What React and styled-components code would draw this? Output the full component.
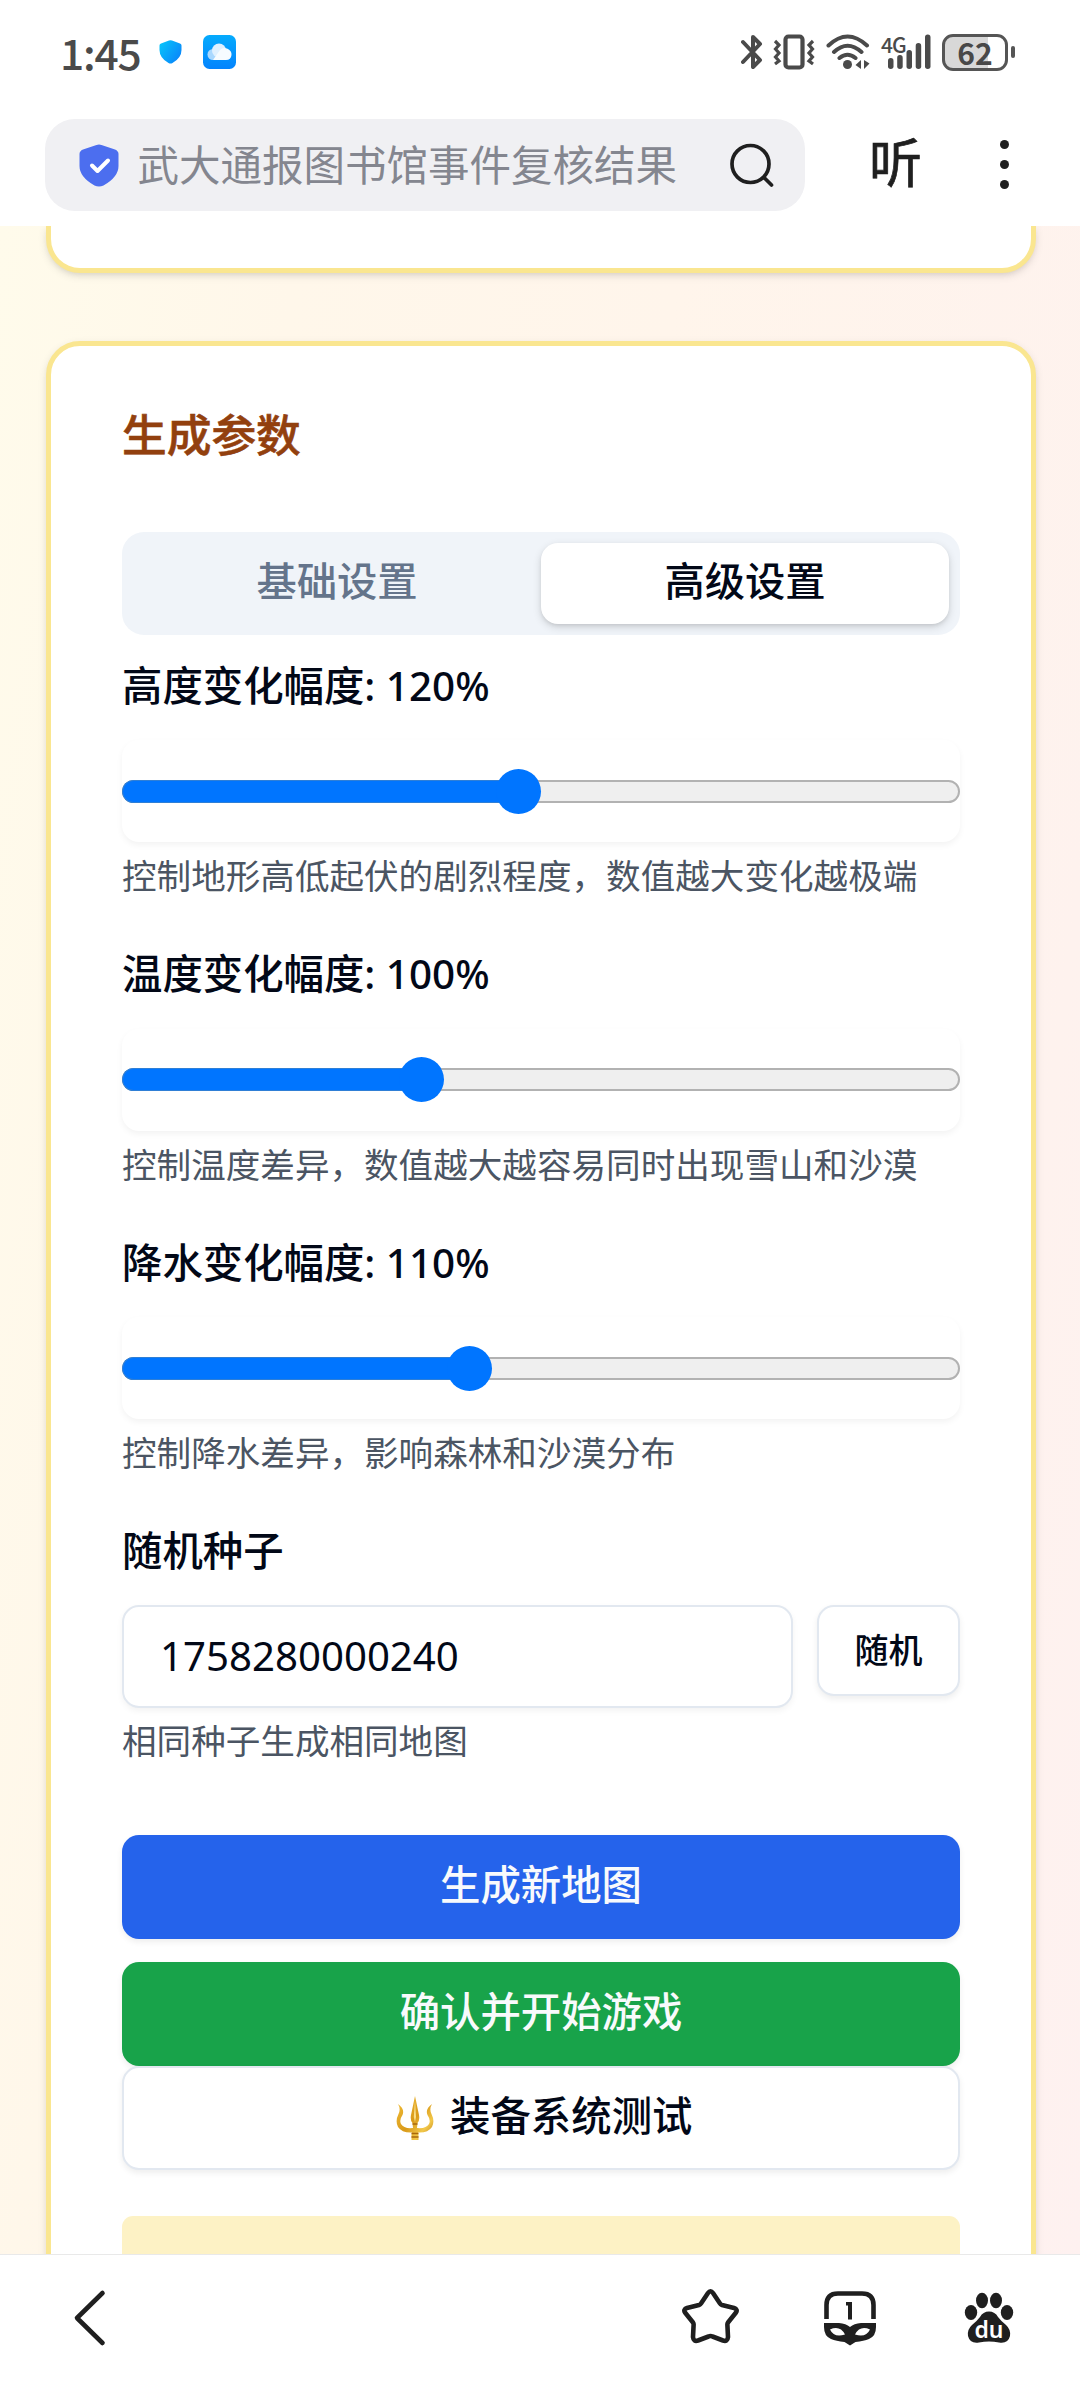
import React from "react";
import styled, { createGlobalStyle } from "styled-components";

const Global = createGlobalStyle`
  * { box-sizing: border-box; }
  html, body { margin: 0; padding: 0; }
  body { background: #fff; }
  button, input { font: inherit; margin: 0; }
`;

const Screen = styled.div`
  width: 1080px;
  height: 2382px;
  display: flex;
  flex-direction: column;
  overflow: hidden;
  background: #fff;
  color: #020817;
  font-family: "Noto Sans", "Noto Sans CJK SC", sans-serif;
`;

const StatusBar = styled.header`
  height: 119px;
  flex: none;
  display: flex;
  align-items: flex-start;
  justify-content: space-between;
  padding: 33px 65px 0 60px;
`;

const StatusGroup = styled.div`
  display: flex;
  align-items: center;
  height: 38px;
`;

const Clock = styled.span`
  font-family: "Noto Sans CJK SC", sans-serif;
  font-size: 42.5px;
  font-weight: 500;
  line-height: 38px;
  letter-spacing: -1.2px;
  width: 99px;
  color: #4a4a4a;
`;

const Network = styled.div`
  display: flex;
  align-items: flex-start;
  margin-left: 11px;
`;

const NetworkType = styled.span`
  width: 17px;
  margin-right: -10px;
  font-family: "Noto Sans CJK SC", sans-serif;
  font-size: 21px;
  font-weight: 500;
  line-height: 20px;
  letter-spacing: -1px;
  white-space: nowrap;
  color: #4a4a4a;
`;

const BatteryText = styled.span`
  font-family: "Noto Sans CJK SC", sans-serif;
  font-size: 30px;
  font-weight: 700;
  line-height: 30px;
`;

const Battery = styled.div`
  width: 66px;
  height: 37px;
  margin-left: 9px;
  border: 3px solid #555;
  border-radius: 11px;
  display: flex;
  align-items: center;
  justify-content: center;
  color: #484848;
  background: linear-gradient(90deg, #d8d8d8 43px, #fff 43px);
`;

const BatteryNub = styled.div`
  width: 4px;
  height: 12px;
  margin-left: 3px;
  border-radius: 2px;
  background: #555;
`;

const AddressBar = styled.div`
  height: 107px;
  flex: none;
  display: flex;
  align-items: flex-start;
  padding-left: 45px;
`;

const SearchPill = styled.div`
  width: 760px;
  height: 92px;
  border-radius: 30px;
  background: #f0f0f3;
  display: flex;
  align-items: center;
  padding: 0 31px 0 34px;
`;

const SearchText = styled.span`
  flex: 1;
  margin-left: 18.5px;
  font-size: 41.5px;
  line-height: 60px;
  color: #84868f;
  white-space: nowrap;
`;

const Listen = styled.span`
  margin: 10px 0 0 64px;
  width: 54px;
  font-size: 53px;
  line-height: 68px;
  font-weight: 400;
  -webkit-text-stroke: 0.7px #1f1f1f;
  color: #1f1f1f;
`;

const MoreDots = styled.div`
  margin: 21px 0 0 77px;
  height: 49px;
  display: flex;
  flex-direction: column;
  justify-content: space-between;
  i { width: 9px; height: 9px; border-radius: 50%; background: #1f1f1f; }
`;

const Page = styled.main`
  flex: 1;
  min-height: 0;
  overflow: hidden;
  padding: 0 44px 0 46px;
  display: flex;
  flex-direction: column;
  gap: 68px;
  background: linear-gradient(98deg, #fffbeb 0%, #fff7ea 22%, #fff5eb 50%, #fef2ee 86%, #fef1f0 100%);
`;

const Card = styled.section`
  flex: none;
  border: 5.5px solid #fae690;
  border-radius: 34px;
  background: #fff;
  box-shadow: 0 3px 8px rgba(0, 0, 0, 0.1), 0 3px 6px -3px rgba(0, 0, 0, 0.1);
`;

const CardTail = styled(Card)`
  height: 46.5px;
  border-top: 0;
  border-top-left-radius: 0;
  border-top-right-radius: 0;
`;

const ParamCard = styled(Card)`
  height: 2100px;
  padding: 57.5px 71px 0;
`;

const Title = styled.h2`
  margin: 0;
  font-size: 44.7px;
  font-weight: 500;
  -webkit-text-stroke: 0.6px #92400e;
  line-height: 64px;
  color: #92400e;
`;

const Tabs = styled.div`
  margin-top: 64.5px;
  height: 103px;
  padding: 11px;
  border-radius: 22px;
  background: #f0f4f9;
  display: grid;
  grid-template-columns: 1fr 1fr;
`;

const Tab = styled.button`
  border: 0;
  padding: 0 0 4px;
  border-radius: 17px;
  font-size: 40.3px;
  font-weight: 500;
  line-height: 56px;
  background: ${(p) => (p.$active ? "#fff" : "transparent")};
  color: ${(p) => (p.$active ? "#020817" : "#64748b")};
  box-shadow: ${(p) => (p.$active ? "0 3px 8px rgba(0,0,0,.14), 0 2px 4px -1px rgba(0,0,0,.1)" : "none")};
`;

const Field = styled.div`
  height: 288.6px;
  padding-top: 21px;
  display: flex;
  flex-direction: column;
`;

const Label = styled.label`
  font-size: 40.4px;
  font-weight: 500;
  line-height: 60px;
  white-space: pre;
`;

const SliderBox = styled.div`
  flex: none;
  margin-top: 24.5px;
  height: 102px;
  border-radius: 17px;
  box-shadow: 0 3px 6px rgba(0, 0, 0, 0.05);
  display: flex;
  align-items: center;
`;

const Track = styled.div`
  flex: 1;
  height: 23px;
  border: 2px solid #b2b2b2;
  border-radius: 12px;
  background: #efefef;
  display: flex;
  align-items: center;
`;

const Fill = styled.div`
  flex: none;
  height: 23px;
  margin-left: -2px;
  border: 1.5px solid #2f7fd6;
  border-right: 0;
  border-radius: 12px 0 0 12px;
  background: #0075ff;
`;

const Thumb = styled.div`
  flex: none;
  width: 45px;
  height: 45px;
  margin-left: -22.5px;
  border-radius: 50%;
  background: #0075ff;
`;

const Hint = styled.p`
  margin: ${(p) => p.$top || 10}px 0 0;
  font-size: 34.6px;
  line-height: 48px;
  color: #4b5563;
  white-space: nowrap;
`;

const SeedField = styled.div`
  padding-top: 21px;
`;

const SeedRow = styled.div`
  margin-top: 24px;
  display: flex;
  align-items: flex-start;
  gap: 24px;
`;

const SeedInput = styled.input`
  flex: 1;
  min-width: 0;
  height: 103px;
  padding: 0 36px 2px;
  border: 2px solid #e2e8f0;
  border-radius: 17px;
  outline: none;
  background: #fff;
  color: #020817;
  font-size: 40.2px;
  box-shadow: 0 3px 6px rgba(0, 0, 0, 0.05);
`;

const Button = styled.button`
  display: flex;
  align-items: center;
  justify-content: center;
  width: 100%;
  height: 104px;
  padding: 0 0 4px;
  border: ${(p) => (p.$bg ? "0" : "2px solid #e2e8f0")};
  border-radius: 17px;
  background: ${(p) => p.$bg || "#fff"};
  color: ${(p) => (p.$bg ? "#f8fafc" : "#020817")};
  font-size: 40.4px;
  font-weight: 500;
  line-height: 60px;
  box-shadow: 0 3px 6px rgba(0, 0, 0, 0.07);
`;

const SmallButton = styled(Button)`
  width: 143px;
  height: 91px;
  padding: 0 0 2px;
  font-size: 34px;
`;

const ButtonText = styled.span`
  margin-left: 16.5px;
`;

const Actions = styled.div`
  margin-top: 70px;
  display: flex;
  flex-direction: column;
`;

const Spacer = styled.div`
  height: 23px;
`;

const Notice = styled.div`
  margin-top: 46px;
  height: 150px;
  border-radius: 11px;
  background: #fdf2c5;
`;

const BottomBar = styled.nav`
  height: 128px;
  flex: none;
  border-top: 1px solid #e9e9e9;
  background: #fff;
  display: flex;
  align-items: flex-start;
  padding: 33px 64px 0 72px;
`;

const Icon = styled.svg`
  display: block;
  flex: none;
  margin-left: ${(p) => p.$ml || 0}px;
  margin-top: ${(p) => p.$mt || 0}px;
`;

const sliders = [
  { label: "高度变化幅度: 120%", at: 396, hint: "控制地形高低起伏的剧烈程度，数值越大变化越极端" },
  { label: "温度变化幅度: 100%", at: 299.7, hint: "控制温度差异，数值越大越容易同时出现雪山和沙漠" },
  { label: "降水变化幅度: 110%", at: 347.5, hint: "控制降水差异，影响森林和沙漠分布" },
];

function StatusIcons() {
  return (
    <StatusGroup>
      <Icon width="22" height="36" viewBox="0 0 22 36" fill="none" stroke="#4a4a4a" strokeWidth="4" strokeLinejoin="round" strokeLinecap="round">
        <path d="M2 8 L19 26 L12 33 V3 L19 10 L2 28" />
      </Icon>
      <Icon $ml={10} width="42" height="36" viewBox="0 0 42 36" fill="none" stroke="#4a4a4a">
        <rect x="12.5" y="2.5" width="17" height="31" rx="3" strokeWidth="4.2" />
        <path d="M2 7 L6 11 L2.5 15 L6 19 L2.5 23 L6 27 L2 30 M40 7 L36 11 L39.5 15 L36 19 L39.5 23 L36 27 L40 30" strokeWidth="3.2" />
      </Icon>
      <Icon $ml={11} width="44" height="36" viewBox="0 0 44 36" fill="none" stroke="#4a4a4a" strokeWidth="4" strokeLinecap="round">
        <path d="M2.5 11.5 Q21.5 -6.5 41 11.5 M8 18 Q21.5 5.500 35.500 18 M13.500 24 Q21.500 17.500 29.500 24" />
        <circle cx="21.5" cy="30.500" r="4.5" fill="#4a4a4a" stroke="none" />
        <path d="M35 26 V35 L29.500 31 Z M38 26 L43.500 29.500 L38 35 Z" fill="#4a4a4a" stroke="none" />
      </Icon>
      <Network>
        <NetworkType>4G</NetworkType>
        <Icon width="45" height="36" viewBox="7 0 45 36" fill="#4a4a4a">
          <rect x="7" y="24" width="5.500" height="11" rx="2.700" />
          <rect x="16.200" y="21" width="5.500" height="14" rx="2.700" />
          <rect x="25.500" y="16" width="5.500" height="19" rx="2.700" />
          <rect x="34.700" y="9" width="5.500" height="26" rx="2.700" />
          <rect x="44" y="0.500" width="5.500" height="34.500" rx="2.700" />
        </Icon>
      </Network>
      <Battery><BatteryText>62</BatteryText></Battery>
      <BatteryNub />
    </StatusGroup>
  );
}

function Trident() {
  return (
    <Icon width="38" height="46" viewBox="0 0 38 46" $mt={3} $ml={6}>
      <defs>
        <linearGradient id="gold" x1="0" y1="0" x2="1" y2="1">
          <stop offset="0" stopColor="#f2c03a" />
          <stop offset="0.5" stopColor="#d99a1a" />
          <stop offset="0.75" stopColor="#f2c84a" />
          <stop offset="1" stopColor="#b87410" />
        </linearGradient>
      </defs>
      <g fill="url(#gold)">
        <path d="M19 1 L23 20 Q24 25 21.500 28 L21 33 Q30 34 33 29 Q35 25 31.500 20 Q29 14 36 9 Q33 14 35.500 19 Q39 26 36 32 Q32 38 22 37.500 L22.500 40 L22.500 45 H15.500 L15.500 40 L16 37.500 Q6 38 2 32 Q-1 26 2.500 19 Q5 14 2 9 Q9 14 6.500 20 Q3 25 5 29 Q8 34 17 33 L16.500 28 Q14 25 15 20 Z" />
      </g>
      <path d="M19 5 L20 22 L19 27 L17.800 22 Z" fill="#fbe08a" />
      <path d="M15.500 38.500 H22.500 M15.500 42 H22.500 M16.500 29 H21.500" stroke="#a9680c" strokeWidth="1.300" />
    </Icon>
  );
}

export default function App() {
  return (
    <>
      <Global />
      <Screen>
        <StatusBar>
          <StatusGroup>
            <Clock>1:45</Clock>
            <Icon width="23" height="24" viewBox="0 0 23 24">
              <defs>
                <linearGradient id="shield" x1="0" y1="0" x2="1" y2="0.700">
                  <stop offset="0" stopColor="#06c8fa" />
                  <stop offset="1" stopColor="#0a86fa" />
                </linearGradient>
                <linearGradient id="cloud" x1="0" y1="0" x2="0" y2="1">
                  <stop offset="0" stopColor="#05abfd" />
                  <stop offset="1" stopColor="#0483fd" />
                </linearGradient>
              </defs>
              <path d="M10 0.600 Q11.500 0 13 0.600 L21 3.500 Q22.500 4 22.500 5.500 V10 Q22.500 18 13.500 23 Q11.500 24 9.500 23 Q0.500 18 0.500 10 V5.500 Q0.500 4 2 3.500 Z" fill="url(#shield)" />
            </Icon>
            <Icon $ml={21} width="33" height="34" viewBox="0 0 33 34">
              <rect width="33" height="34" rx="6.500" fill="url(#cloud)" />
              <circle cx="10" cy="19.500" r="5.500" fill="#a9d8ff" />
              <circle cx="16" cy="15.500" r="7" fill="#dff0ff" />
              <path d="M10 25 L17 15 Q20 12 24 13.500 Q29 15.500 28.500 20 Q28 25 23 25 Z" fill="#f6fbff" />
            </Icon>
          </StatusGroup>
          <StatusIcons />
        </StatusBar>

        <AddressBar>
          <SearchPill>
            <Icon width="40" height="43" viewBox="0 0 40 43">
              <path d="M17.500 1 Q20 0 22.500 1 L36 5.500 Q39.500 7 39.500 10 V22 Q39.500 33 24.500 41.500 Q20 43.500 15.500 41.500 Q0.500 33 0.500 22 V10 Q0.500 7 4 5.500 Z" fill="#4c6eef" />
              <path d="M13 21.500 L18.500 27 L29 16.500" fill="none" stroke="#fff" strokeWidth="4" strokeLinecap="round" strokeLinejoin="round" />
            </Icon>
            <SearchText>武大通报图书馆事件复核结果</SearchText>
            <Icon width="44" height="44" viewBox="0 0 44 44" fill="none" stroke="#1f1f1f" strokeWidth="3.700" strokeLinecap="round">
              <circle cx="20.500" cy="21" r="18.500" />
              <path d="M34 34.500 L41.500 42" />
            </Icon>
          </SearchPill>
          <Listen>听</Listen>
          <MoreDots><i /><i /><i /></MoreDots>
        </AddressBar>

        <Page>
          <CardTail />
          <ParamCard>
            <Title>生成参数</Title>
            <Tabs>
              <Tab>基础设置</Tab>
              <Tab $active>高级设置</Tab>
            </Tabs>
            {sliders.map((s) => (
              <Field key={s.label}>
                <Label>{s.label}</Label>
                <SliderBox>
                  <Track>
                    <Fill style={{ width: s.at }} />
                    <Thumb />
                  </Track>
                </SliderBox>
                <Hint>{s.hint}</Hint>
              </Field>
            ))}
            <SeedField>
              <Label>随机种子</Label>
              <SeedRow>
                <SeedInput defaultValue="1758280000240" />
                <SmallButton>随机</SmallButton>
              </SeedRow>
              <Hint $top={9}>相同种子生成相同地图</Hint>
            </SeedField>
            <Actions>
              <Button $bg="#2563eb">生成新地图</Button>
              <Spacer />
              <Button $bg="#18a34a">确认并开始游戏</Button>
              <Button><Trident /><ButtonText>装备系统测试</ButtonText></Button>
            </Actions>
            <Notice />
          </ParamCard>
        </Page>

        <BottomBar>
          <Icon width="36" height="60" viewBox="0 0 36 60" fill="none" stroke="#1f1f1f" strokeWidth="4.600" strokeLinecap="round" strokeLinejoin="round">
            <path d="M30.500 5 L5 30 L30.500 55" />
          </Icon>
          <Icon $ml={574} width="58" height="58" viewBox="0 0 58 58" fill="none" stroke="#1f1f1f" strokeWidth="4.600" strokeLinejoin="round">
            <path d="M26 5 Q28.500 1.500 31 5 L38 15.500 Q38.500 16.500 40 17 L52 20 Q56 21.500 54 24.500 L46 34.500 Q45.300 35.500 45.400 37 L46 49 Q45.500 54 41 52.500 L30.500 48.500 Q28.500 47.500 26.500 48.500 L16 52.500 Q11.500 54 11 49 L11.600 37 Q11.700 35.500 11 34.500 L3 24.500 Q1 21.500 5 20 L17 17 Q18.500 16.500 19 15.500 Z" />
          </Icon>
          <Icon $ml={81} width="58" height="60" viewBox="0 0 58 60">
            <path d="M5.500 31 V17 Q5.500 5.500 17 5.500 H41 Q52.500 5.500 52.500 17 V31" fill="none" stroke="#1f1f1f" strokeWidth="4.600" />
            <path d="M25 14 H31 V31.500 H27 V17.500 H25 Z" fill="#1f1f1f" />
            <path d="M3 35 H18 Q25 35.500 29 39 Q33 35.500 40 35 H55 V39 Q55 48 48 51 Q43 53 34.500 54 L29 57.500 L23.500 54 Q15 53 10 51 Q3 48 3 39 Z" fill="#1f1f1f" />
            <path d="M9 41.500 Q19 37 24 46.500 Q13 50 9 41.500 Z M49 41.500 Q39 37 34 46.500 Q45 50 49 41.500 Z" fill="#fff" />
          </Icon>
          <Icon $ml={84} $mt={3} width="52" height="54" viewBox="0 0 52 54" fill="#1f1f1f">
            <ellipse cx="19" cy="9.500" rx="6" ry="7.800" />
            <ellipse cx="33" cy="9.500" rx="6" ry="7.800" />
            <ellipse cx="8" cy="21.500" rx="6.200" ry="7.400" />
            <ellipse cx="44" cy="21.500" rx="6.200" ry="7.400" />
            <path d="M26 20.500 Q32 20.500 35 26 Q38 30 43 34 Q48 38.500 47 45 Q45 53 36 51.500 Q26 49.500 16 51.500 Q7 53 5 45 Q4 38.500 9 34 Q14 30 17 26 Q20 20.500 26 20.500 Z" />
            <text x="26" y="46.500" textAnchor="middle" fill="#fff" fontFamily="Noto Sans" fontWeight="600" fontSize="24" textLength="29" lengthAdjust="spacingAndGlyphs">du</text>
          </Icon>
        </BottomBar>
      </Screen>
    </>
  );
}
